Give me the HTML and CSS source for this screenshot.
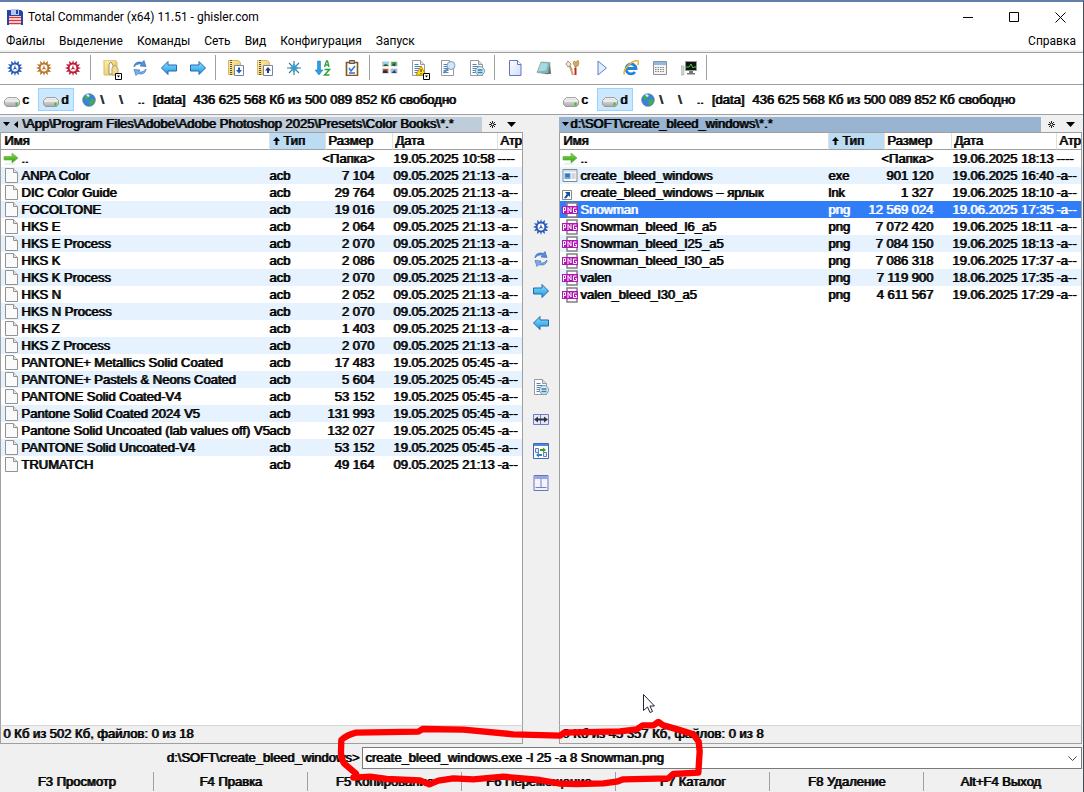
FILE: index.html
```html
<!DOCTYPE html>
<html lang="ru">

<head>
  <meta charset="UTF-8" />
  <meta name="viewport" content="width=device-width, initial-scale=1.0" />
  <title>Total Commander (x64) 11.51 - ghisler.com</title>
  <link rel="stylesheet" href="styles.css">
</head>

<body>
  <!-- ICONS -->
  <svg class="defs" aria-hidden="true">
    <defs>
      <linearGradient id="gBlue" x1="0" y1="0" x2="0" y2="1">
        <stop offset="0" stop-color="#8fe0ff" />
        <stop offset="1" stop-color="#1c96e0" />
      </linearGradient>
      <linearGradient id="gGreen" x1="0" y1="0" x2="0" y2="1">
        <stop offset="0" stop-color="#8be04a" />
        <stop offset="1" stop-color="#2c9a10" />
      </linearGradient>
      <linearGradient id="gFolder" x1="0" y1="0" x2="1" y2="1">
        <stop offset="0" stop-color="#fff0ae" />
        <stop offset="1" stop-color="#e4bd55" />
      </linearGradient>
      <linearGradient id="gDisk" x1="0" y1="0" x2="0" y2="1">
        <stop offset="0" stop-color="#f4f4f4" />
        <stop offset="1" stop-color="#a9a9a9" />
      </linearGradient>
      <linearGradient id="gPage" x1="0" y1="0" x2="1" y2="1">
        <stop offset="0" stop-color="#ffffff" />
        <stop offset="1" stop-color="#cfdcfa" />
      </linearGradient>
    </defs>
    <symbol id="gear" viewBox="0 0 16 16">
      <path d="M8 0l1 3.2L12 1l-.4 3.4L15 4.500l-2.200 2.500L16 8l-3.200 1.200L15 12l-3.500-.300L12 15l-3-2.200L8 16l-1-3.200L4 15l.400-3.400L1 12l2.200-2.800L0 8l3.200-1.200L1 4.200l3.500.200L4 1l3 2.200z" fill="currentColor" />
      <circle cx="8" cy="8" r="3.400" fill="#fff" />
      <path d="M8 5l.8 3L11 9.500 8 9l-2.500 1L7 8z" fill="currentColor" />
    </symbol>
    <symbol id="tools" viewBox="0 0 19 20">
      <path d="M1 0h11l2 2v13H1z" fill="url(#gFolder)" stroke="#dcb95c" />
      <path d="M6 14V4l2-2 2 3v9z" fill="#f8f8f2" stroke="#999680" />
      <path d="M9 15V8l3-3 3 4v6z" fill="#eedb9a" stroke="#c3a25b" />
      <path d="M12.500 13.500h6v6h-6z" fill="#fff" stroke="#000" />
      <path d="M14 15.500h3l-1.500 2z" fill="#000" />
    </symbol>
    <symbol id="refresh" viewBox="0 0 16 16">
      <path d="M2 7C2 3 6 1 10 2.500L12 .500l2 6-6-.500 1.500-1.500C7 3.500 4.500 4 2 7z" fill="#568fd6" stroke="#2b61b1" stroke-width=".6" />
      <path d="M14 9c0 4-4 6-8 4.500l-2 2-2-6 6 .500-1.500 1.500C9 12.500 11.500 12 14 9z" fill="#7db1eb" stroke="#2b61b1" stroke-width=".6" />
    </symbol>
    <symbol id="left" viewBox="0 0 16 16">
      <path d="M.500 8L7 1.500V5h8.500v6H7v3.500z" fill="url(#gBlue)" stroke="#2369ad" />
    </symbol>
    <symbol id="right" viewBox="0 0 16 16">
      <path d="M15.500 8L9 1.500V5H.500v6H9v3.500z" fill="url(#gBlue)" stroke="#2369ad" />
    </symbol>
    <symbol id="zip" viewBox="0 0 16 16">
      <path d="M.500.500h10l2 2v12h-12z" fill="url(#gFolder)" stroke="#dcb95c" />
      <path d="M3 0v15" stroke="#5a5340" stroke-width="2" stroke-dasharray="1 1" />
      <path d="M6.500 5.500h9v10h-9z" fill="#fff" stroke="#7483a8" />
    </symbol>
    <symbol id="pack" viewBox="0 0 16 16">
      <use href="#zip" />
      <path d="M8 10h2V7.500h2V10h2l-3 3.500z" fill="#1d5dab" />
    </symbol>
    <symbol id="unpack" viewBox="0 0 16 16">
      <use href="#zip" />
      <path d="M8 10.500h2V13h2v-2.500h2L11 7z" fill="#173c88" />
    </symbol>
    <symbol id="star" viewBox="0 0 16 16">
      <path d="M8 1v14M1 8h14M3 3l10 10M13 3L3 13" stroke="#4d7a90" stroke-width="1.200" />
      <path d="M8 4v8M4 8h8M5.500 5.500l5 5M10.500 5.500l-5 5" stroke="#2fa0d0" stroke-width="1.400" />
    </symbol>
    <symbol id="sort" viewBox="0 0 16 16">
      <path d="M2.500 1h3v9H8l-4 5-4-5h2.500z" fill="#2c9ee2" stroke="#1874b8" stroke-width=".5" />
      <path d="M9.500 7l2-6h1l1.500 6M10 5h3.500" stroke="#2fa040" stroke-width="1.300" fill="none" />
      <path d="M9.500 9.500h5l-5 5.500h5" stroke="#2fa040" stroke-width="1.400" fill="none" />
    </symbol>
    <symbol id="clip" viewBox="0 0 16 16">
      <path d="M2.500 2.500h11v13h-11z" fill="#fff" stroke="#8a5420" stroke-width="1.600" />
      <path d="M5.500.500h5v3h-5z" fill="#aaa" stroke="#555" />
      <path d="M5 8l2 3 4-5M5 13h6" stroke="#2d77c9" stroke-width="1.500" fill="none" />
    </symbol>
    <symbol id="thumbs" viewBox="0 0 16 16">
      <path d="M0 1.500h7v5H0zM8.500 1.500h7v5h-7zM0 8.500h7v5H0zM8.500 8.500h7v5h-7z" fill="#c8c8c8" />
      <path d="M1 2h5v4H1z" fill="#8fd0f2" />
      <path d="M1 6l2-2 3 1v1z" fill="#245a2d" />
      <path d="M9.500 2h5v4h-5z" fill="#42a23a" />
      <path d="M10 5l3-2v3z" fill="#163d7a" />
      <path d="M1 9h5v4H1z" fill="#d35624" />
      <path d="M1 11l3-1 2 3H1z" fill="#252b50" />
      <path d="M9.500 9h5v4h-5z" fill="#92b9df" />
      <path d="M9.500 13l3-3 2 3z" fill="#27466e" />
    </symbol>
    <symbol id="doc" viewBox="0 0 16 16">
      <path d="M1.500.500h8l4 4v11h-12z" fill="#fff" stroke="#9a9a9a" />
      <path d="M9.500.500v4h4" fill="#ddd" stroke="#9a9a9a" />
      <path d="M3.500 4.500h4M3.500 6.500h7M3.500 8.500h7M3.500 10.500h5M3.500 12.500h5" stroke="#4f82bd" />
    </symbol>
    <symbol id="warn" viewBox="0 0 19 20">
      <use href="#doc" width="16" height="16" />
      <path d="M10 6l5 9H5z" fill="#ffdf1f" stroke="#c98d00" />
      <path d="M10 9v3M10 13v1" stroke="#3b2b00" />
      <path d="M12.500 13.500h6v6h-6z" fill="#fff" stroke="#000" />
      <path d="M14 15.500h3l-1.500 2z" fill="#000" />
    </symbol>
    <symbol id="find" viewBox="0 0 16 16">
      <use href="#doc" />
      <circle cx="11" cy="5.500" r="4" fill="#cfe5f8" stroke="#7a9fc4" />
      <path d="M8 8.500L3.500 13" stroke="#658bb5" stroke-width="2" />
    </symbol>
    <symbol id="cmp" viewBox="0 0 16 16">
      <use href="#doc" />
      <circle cx="11" cy="11" r="4.500" fill="#dbecf8" stroke="#7f98aa" />
      <path d="M8.500 10h5M8.500 12.500h5" stroke="#347fae" stroke-width="1.300" />
    </symbol>
    <symbol id="page" viewBox="0 0 16 16">
      <path d="M2.500.500h8l3.500 4v11H2.500z" fill="url(#gPage)" stroke="#6575bd" />
      <path d="M10.500.500v4H14" fill="#fff" stroke="#6575bd" />
    </symbol>
    <symbol id="note" viewBox="0 0 16 16">
      <path d="M5 2l9 .500L12 14 1 12.500z" fill="#75b9bd" stroke="#8a9ba0" stroke-width=".7" />
      <path d="M5 3l7 .500-2 7-8 1z" fill="#a5dbe0" />
      <path d="M14 3l1 11H6l6-1z" fill="#6d6f68" />
    </symbol>
    <symbol id="paint" viewBox="0 0 16 16">
      <path d="M4 5l3 5M11 5l-1 5" stroke="#a98b65" stroke-width="1.500" />
      <path d="M5.500 8l2.500 7" stroke="#c9a578" stroke-width="2" />
      <path d="M10.500 8v7" stroke="#c62a20" stroke-width="2" />
      <path d="M1 4l2-3 3 3-1 2-2 1z" fill="#f0e7d8" stroke="#8f6f4a" stroke-width=".7" />
      <path d="M8 3l1-2 2 1 2-2 1 3-1 3-3 1z" fill="#d9a75c" stroke="#a06c2e" stroke-width=".5" />
    </symbol>
    <symbol id="play" viewBox="0 0 16 16">
      <path d="M4 1v14l8.500-7z" fill="#e3ecfc" stroke="#5c7fc9" />
    </symbol>
    <symbol id="ie" viewBox="0 0 16 16">
      <path d="M3.500 8.500H13A5 5 0 1 0 12 12" fill="none" stroke="#2085d8" stroke-width="2.800" />
      <path d="M1.500 14.500C-1 11 9-1 15 1c1 .500.500 3-.500 4" fill="none" stroke="#e8b22c" stroke-width="1.500" />
    </symbol>
    <symbol id="calc" viewBox="0 0 16 16">
      <path d="M1.500 1.500h13v13h-13z" fill="#f4f4f4" stroke="#8c9299" />
      <path d="M2 2h12v3H2z" fill="#8eb8df" />
      <path d="M3 7.500h10M3 9.500h10M3 11.500h10" stroke="#888" stroke-dasharray="1.500 1" />
    </symbol>
    <symbol id="monitor" viewBox="0 0 16 16">
      <path d="M0 6h3v9H0z" fill="#d5d5d5" stroke="#999" stroke-width=".5" />
      <path d="M4.500 1.500h11v9h-11z" fill="#111" stroke="#999" />
      <path d="M5 7h3l2-3 2 4 1-1h2" stroke="#3bd337" fill="none" />
      <path d="M8 11h4v2H8zM6 13h8v1.500H6z" fill="#777" />
    </symbol>
    <symbol id="syncdirs" viewBox="0 0 16 16">
      <path d="M.500 3.500h7v10h-7zM7.500 3.500h8v10h-8z" fill="#e4e9fa" stroke="#7379c9" />
      <path d="M1 8.500l4-3v2h6v-2l4 3-4 3v-2H5v2z" fill="#333" />
    </symbol>
    <symbol id="swap" viewBox="0 0 16 16">
      <path d="M.500.500h15v15H.500z" fill="#fff" stroke="#3f66b5" />
      <path d="M1 1h14v2H1z" fill="#4c8bdb" />
      <path d="M2.500 5.500h3v4h-3zM10.500 9.500h3v4h-3z" fill="#e7ecfb" stroke="#6379bb" />
      <path d="M7 6h3V4.500L13 7l-3 2.500V8H7z" fill="#3b9b20" />
      <path d="M9 11H6V9.500L3 12l3 2.500V13h3z" fill="#2b80ce" />
    </symbol>
    <symbol id="panels" viewBox="0 0 16 16">
      <path d="M1 .500h14v15H1z" fill="#f2f3fc" stroke="#6b74be" />
      <path d="M1.500 1h13v3h-13z" fill="#93a7e3" />
      <path d="M8 4v9M2.500 12.500h11" stroke="#777fc1" />
    </symbol>
    <symbol id="disk" viewBox="0 0 16 10">
      <path d="M3.500.500h9l3 3v4l-2 2h-11l-2-2v-4z" fill="url(#gDisk)" stroke="#8e8e8e" stroke-width=".8" />
      <path d="M1 4h14" stroke="#fff" />
      <path d="M11.500 5.500h2v3h-2z" fill="#35c522" />
    </symbol>
    <symbol id="globe" viewBox="0 0 14 14">
      <circle cx="7" cy="7" r="6.300" fill="#3f7fdb" stroke="#52749e" stroke-width=".7" />
      <path d="M2 4c2-3 5-3 6-2L7 5 4 7zM7 8l3-2 3 1-2 4-3 2z" fill="#36b34a" />
      <path d="M4 2l2-1 2 2-2 1z" fill="#d8edf5" />
    </symbol>
    <symbol id="up" viewBox="0 0 16 12">
      <path d="M1 3.500h8V0l6 5-6 5V7H1z" fill="url(#gGreen)" stroke="#68b04a" stroke-width=".7" />
      <path d="M2 11h10" stroke="#d6e9ce" />
    </symbol>
    <symbol id="file" viewBox="0 0 13 15">
      <path d="M.500.500h8l4 4v10H.500z" fill="#fafafa" stroke="#929292" />
      <path d="M8.500.500v4h4" fill="#e4e4e4" stroke="#929292" />
    </symbol>
    <symbol id="exe" viewBox="0 0 15 13">
      <path d="M.500.500h14v12H.500z" fill="#fafafa" stroke="#7e8a96" />
      <path d="M1 2h13" stroke="#b8c3cd" />
      <path d="M2 4h6v6H2z" fill="#6aa5db" />
      <path d="M3 5h4v3H3z" fill="#2d75bd" />
      <path d="M9 5h4M9 7h4M9 9h4" stroke="#a2b7ca" />
    </symbol>
    <symbol id="lnk" viewBox="0 0 10 10">
      <path d="M.500.500h9v9h-9z" fill="#fff" stroke="#888" />
      <path d="M3 2h5v5L6.500 5.500 4 8.500 2 8l2.800-4z" fill="#194f9c" />
    </symbol>
    <symbol id="png" viewBox="0 0 16 16">
      <path d="M5 1h10v14H5z" fill="#fff" stroke="#808080" stroke-width="1.500" />
      <path d="M0 4h16v8H0z" fill="#b515b5" />
      <path d="M1.500 11V5.500h2v3h-2M6 11V5.500L9 10V5M14.500 6h-3v4.500h3V8.500H13" stroke="#fff" fill="none" />
    </symbol>
    <symbol id="drop" viewBox="0 0 9 5">
      <path d="M0 0h9L4.500 5z" fill="#000" />
    </symbol>
    <symbol id="fav" viewBox="0 0 7 7">
      <path d="M3.500 0v7M0 3.500h7M1 1l5 5M6 1L1 6" stroke="#000" stroke-width=".9" />
      <circle cx="3.500" cy="3.500" r="1" fill="#fff" />
    </symbol>
    <symbol id="sortup" viewBox="0 0 7 8">
      <path d="M3.500 0L7 4H4.500v4h-2V4H0z" fill="#000" />
    </symbol>
  </svg>

  <div class="window">
    <header class="titlebar">
      <svg class="logo" viewBox="0 0 16 16">
        <path d="M0 1h14l2 2v13H0z" fill="#2345a5" />
        <path d="M4 0h8v6H4z" fill="#b9c8e8" />
        <path d="M9 1h2v4H9z" fill="#2345a5" />
        <path d="M2 7h12v9H2z" fill="#fff" />
        <path d="M2 8.500h12M2 11.500h12M2 14.500h12" stroke="#e0303a" stroke-width="1.500" />
      </svg>
      <h1>Total Commander (x64) 11.51 - ghisler.com</h1>
      <div class="winbtns">
        <button aria-label="Свернуть"><svg viewBox="0 0 11 11"><path d="M0 5.500h10" /></svg></button>
        <button aria-label="Развернуть"><svg viewBox="0 0 11 11"><path d="M.500.500h9v9h-9z" /></svg></button>
        <button aria-label="Закрыть"><svg viewBox="0 0 11 11"><path d="M.500.500l10 10M10.500.500l-10 10" /></svg></button>
      </div>
    </header>

    <nav class="menu">
      <button>Файлы</button>
      <button>Выделение</button>
      <button>Команды</button>
      <button>Сеть</button>
      <button>Вид</button>
      <button>Конфигурация</button>
      <button>Запуск</button>
      <button class="help">Справка</button>
    </nav>

    <div class="toolbar" id="toolbar"></div>

    <div class="drives">
      <div class="drivebar">
        <button class="drive"><svg class="disk"><use href="#disk" /></svg>c</button>
        <button class="drive active"><svg class="disk"><use href="#disk" /></svg>d</button>
        <button class="net"><svg class="globe"><use href="#globe" /></svg>\</button>
        <button class="nav">\</button>
        <button class="nav">..</button>
        <span class="label">[data]</span>
        <span>436 625 568 Кб из 500 089 852 Кб свободно</span>
      </div>
      <div class="drivebar">
        <button class="drive"><svg class="disk"><use href="#disk" /></svg>c</button>
        <button class="drive active"><svg class="disk"><use href="#disk" /></svg>d</button>
        <button class="net"><svg class="globe"><use href="#globe" /></svg>\</button>
        <button class="nav">\</button>
        <button class="nav">..</button>
        <span class="label">[data]</span>
        <span>436 625 568 Кб из 500 089 852 Кб свободно</span>
      </div>
    </div>

    <main class="panels">
      <section class="panel">
        <div class="pathrow">
          <div class="path">
            <svg class="tri" viewBox="0 0 7 4"><path d="M0 0h7L3.500 4z" /></svg>
            <svg class="back" viewBox="0 0 4 7"><path d="M4 0v7L0 3.500z" /></svg>
            <span>\App\Program Files\Adobe\Adobe Photoshop 2025\Presets\Color Books\*.*</span>
          </div>
          <button class="favbtn" aria-label="Избранное"><svg><use href="#fav" /></svg></button>
          <button class="histbtn" aria-label="История"><svg><use href="#drop" /></svg></button>
        </div>
        <div class="list">
          <table>
            <thead>
              <tr>
                <th class="name">Имя</th>
                <th class="ext"><svg><use href="#sortup" /></svg>Тип</th>
                <th class="size">Размер</th>
                <th class="date">Дата</th>
                <th class="attr">Атр</th>
              </tr>
            </thead>
            <tbody id="leftFiles"></tbody>
          </table>
        </div>
        <div class="status">0 Кб из 502 Кб, файлов: 0 из 18</div>
      </section>

      <div class="middle" id="middle"></div>

      <section class="panel">
        <div class="pathrow">
          <div class="path current">
            <svg class="tri" viewBox="0 0 7 4"><path d="M0 0h7L3.500 4z" /></svg>
            <span>d:\SOFT\create_bleed_windows\*.*</span>
          </div>
          <button class="favbtn" aria-label="Избранное"><svg><use href="#fav" /></svg></button>
          <button class="histbtn" aria-label="История"><svg><use href="#drop" /></svg></button>
        </div>
        <div class="list">
          <table>
            <thead>
              <tr>
                <th class="name">Имя</th>
                <th class="ext"><svg><use href="#sortup" /></svg>Тип</th>
                <th class="size">Размер</th>
                <th class="date">Дата</th>
                <th class="attr">Атр</th>
              </tr>
            </thead>
            <tbody id="rightFiles"></tbody>
          </table>
        </div>
        <div class="status">0 Кб из 45 357 Кб, файлов: 0 из 8</div>
      </section>
    </main>

    <div class="cmdline">
      <label for="cmd">d:\SOFT\create_bleed_windows&gt;</label>
      <div class="combo">
        <input id="cmd" type="text" value="create_bleed_windows.exe -l 25 -a 8 Snowman.png" />
        <button aria-label="Список команд"><svg viewBox="0 0 9 5"><path d="M.500.500l4 4 4-4" /></svg></button>
      </div>
    </div>

    <footer class="fkeys">
      <button>F3 Просмотр</button>
      <button>F4 Правка</button>
      <button>F5 Копирование</button>
      <button>F6 Перемещение</button>
      <button>F7 Каталог</button>
      <button>F8 Удаление</button>
      <button>Alt+F4 Выход</button>
    </footer>
  </div>

  <svg class="marker" viewBox="0 0 1200 336" aria-hidden="true">
    <path d="M78 281L42 250Q32 235 33 215L34 180Q50 165 78 158L265 155L278 147L400 149L550 163L690 167L702 158L870 154L920 148L938 136L970 136L985 126L1000 136L1045 149L1090 163L1106 185L1109 215L1105 278L1030 282L1015 295L880 298L860 305L820 310L740 312L690 311L630 300L520 290L430 298L370 295L325 302L298 313L270 301L170 297L120 290L70 293" />
  </svg>
  <svg class="cursor" viewBox="0 0 12 19" aria-hidden="true">
    <path d="M.500.500v16l4-3.500 2.500 5.500 2.500-1-2.500-5.500h4.500z" />
  </svg>

  <script>
    const icon = (id, cls = '') => `<svg class="${cls}"><use href="#${id}" /></svg>`;

    const toolbar = [
      ['gear', 'blue'], ['gear', 'orange'], ['gear', 'red'], null,
      ['tools', 'big'], ['refresh'], ['left'], ['right'], null,
      ['pack'], ['unpack'], ['star'], ['sort'], ['clip'], null,
      ['thumbs'], ['warn', 'big'], ['find'], ['cmp'], null,
      ['page'], ['note'], ['paint'], ['play'], ['ie'], ['calc'], ['monitor'], null
    ];
    document.getElementById('toolbar').innerHTML = toolbar
      .map(b => b ? `<button aria-label="${b[0]}">${icon(b[0], b[1])}</button>` : '<i class="sep"></i>')
      .join('');

    const middle = [['gear', 'blue'], ['refresh'], ['right'], ['left'], null, ['cmp'], ['syncdirs'], ['swap'], ['panels']];
    document.getElementById('middle').innerHTML = middle
      .map(b => b ? `<button aria-label="${b[0]}">${icon(b[0], b[1])}</button>` : '<i class="space"></i>')
      .join('');

    // icon, name, type, size, date, attributes
    const leftFiles = [
      ['up', '..', '', '<Папка>', '19.05.2025 10:58', '----'],
      ['file', 'ANPA Color', 'acb', '7 104', '09.05.2025 21:13', '-a--'],
      ['file', 'DIC Color Guide', 'acb', '29 764', '09.05.2025 21:13', '-a--'],
      ['file', 'FOCOLTONE', 'acb', '19 016', '09.05.2025 21:13', '-a--'],
      ['file', 'HKS E', 'acb', '2 064', '09.05.2025 21:13', '-a--'],
      ['file', 'HKS E Process', 'acb', '2 070', '09.05.2025 21:13', '-a--'],
      ['file', 'HKS K', 'acb', '2 086', '09.05.2025 21:13', '-a--'],
      ['file', 'HKS K Process', 'acb', '2 070', '09.05.2025 21:13', '-a--'],
      ['file', 'HKS N', 'acb', '2 052', '09.05.2025 21:13', '-a--'],
      ['file', 'HKS N Process', 'acb', '2 070', '09.05.2025 21:13', '-a--'],
      ['file', 'HKS Z', 'acb', '1 403', '09.05.2025 21:13', '-a--'],
      ['file', 'HKS Z Process', 'acb', '2 070', '09.05.2025 21:13', '-a--'],
      ['file', 'PANTONE+ Metallics Solid Coated', 'acb', '17 483', '19.05.2025 05:45', '-a--'],
      ['file', 'PANTONE+ Pastels & Neons Coated', 'acb', '5 604', '19.05.2025 05:45', '-a--'],
      ['file', 'PANTONE Solid Coated-V4', 'acb', '53 152', '19.05.2025 05:45', '-a--'],
      ['file', 'Pantone Solid Coated 2024 V5', 'acb', '131 993', '19.05.2025 05:45', '-a--'],
      ['file', 'Pantone Solid Uncoated (lab values off) V5', 'acb', '132 027', '19.05.2025 05:45', '-a--'],
      ['file', 'PANTONE Solid Uncoated-V4', 'acb', '53 152', '19.05.2025 05:45', '-a--'],
      ['file', 'TRUMATCH', 'acb', '49 164', '09.05.2025 21:13', '-a--']
    ];
    const rightFiles = [
      ['up', '..', '', '<Папка>', '19.06.2025 18:13', '----'],
      ['exe', 'create_bleed_windows', 'exe', '901 120', '19.06.2025 16:40', '-a--'],
      ['lnk', 'create_bleed_windows – ярлык', 'lnk', '1 327', '19.06.2025 18:10', '-a--'],
      ['png', 'Snowman', 'png', '12 569 024', '19.06.2025 17:35', '-a--'],
      ['png', 'Snowman_bleed_l6_a5', 'png', '7 072 420', '19.06.2025 18:11', '-a--'],
      ['png', 'Snowman_bleed_l25_a5', 'png', '7 084 150', '19.06.2025 18:13', '-a--'],
      ['png', 'Snowman_bleed_l30_a5', 'png', '7 086 318', '19.06.2025 17:37', '-a--'],
      ['png', 'valen', 'png', '7 119 900', '18.06.2025 17:35', '-a--'],
      ['png', 'valen_bleed_l30_a5', 'png', '4 611 567', '19.06.2025 17:29', '-a--']
    ];

    const esc = (s) => s.replace(/&/g, '&amp;').replace(/</g, '&lt;').replace(/>/g, '&gt;');

    const fill = (id, files, selected) => {
      document.getElementById(id).innerHTML = files.map((f, i) => `
        <tr class="${i === selected ? 'selected' : ''}">
          <td><div class="file">${icon(f[0], 'ico-' + f[0])}<span>${esc(f[1])}</span></div></td>
          <td>${f[2]}</td>
          <td><div class="num">${esc(f[3])}</div></td>
          <td class="when">${f[4]}</td>
          <td>${f[5]}</td>
        </tr>`).join('');
    };
    fill('leftFiles', leftFiles, -1);
    fill('rightFiles', rightFiles, 3);
  </script>
</body>

</html>
```
FILE: styles.css
```css
* {
  box-sizing: border-box;
}

body {
  margin: 0;
  position: relative;
  overflow: hidden;
  font: 13px/17px "Liberation Sans", Arial, sans-serif;
  color: #000;
}

button {
  padding: 0;
  border: 0;
  background: none;
  font: inherit;
  color: inherit;
  text-shadow: inherit;
}

svg {
  display: block;
  flex: none;
}

.defs {
  position: absolute;
  width: 0;
  height: 0;
}

.window {
  display: flex;
  flex-direction: column;
  height: 100vh;
  background: #f0f0f0;
  border-top: 2px solid #6380ab;
  border-right: 1px solid #454b55;
}

/* title and menu */
.titlebar {
  display: flex;
  align-items: center;
  height: 30px;
  padding-left: 7px;
  background: #fff;
}

.titlebar h1 {
  margin: 0 0 0 5px;
  flex: 1;
  font: 12px/16px Roboto, "Open Sans", sans-serif;
}

.logo {
  width: 16px;
  height: 16px;
}

.winbtns {
  display: flex;
}

.winbtns button {
  display: grid;
  place-items: center;
  width: 46px;
  height: 28px;
}

.winbtns svg {
  width: 11px;
  height: 11px;
  fill: none;
  stroke: #000;
}

.menu {
  display: flex;
  gap: 14px;
  height: 20px;
  padding: 0 7px 0 6px;
  background: #fff;
  border-bottom: 2px solid #f0f0f0;
  font: 12px/18px Roboto, "Open Sans", sans-serif;
}

.help {
  margin-left: auto;
}

/* toolbar */
.toolbar {
  display: flex;
  align-items: center;
  height: 33px;
  padding-bottom: 2px;
  background: #fff;
  border-top: 1px solid #a0a0a0;
  border-bottom: 1px solid #a0a0a0;
}

.toolbar button {
  display: grid;
  place-items: center;
  width: 29px;
  height: 29px;
}

.toolbar svg,
.middle svg {
  width: 16px;
  height: 16px;
}

.toolbar .big {
  width: 19px;
  height: 20px;
  margin: 4px 0 0 3px;
}

.sep {
  width: 1px;
  height: 25px;
  margin: 0 5px 0 3px;
  background: #a0a0a0;
}

.blue {
  color: #2858b8;
}

.orange {
  color: #b87528;
}

.red {
  color: #c01838;
}

/* bold look of the classic system font */
.drives,
.panels,
.cmdline,
.fkeys {
  text-shadow: 1px 0 0 currentColor;
}

.drives {
  display: flex;
  gap: 36px;
  height: 30px;
  padding-right: 1px;
  background: #fff;
  border-bottom: 1px solid #a0a0a0;
}

.drivebar {
  display: flex;
  align-items: center;
  flex: 1;
  min-width: 0;
  white-space: nowrap;
}

.drive {
  display: flex;
  align-items: center;
  gap: 2px;
  width: 38px;
  height: 23px;
  padding-left: 4px;
}

.drive.active {
  width: 36px;
  background: #cce8ff;
  border: 1px solid #99d1ff;
}

.disk {
  width: 16px;
  height: 10px;
  margin-top: 4px;
}

.globe {
  width: 14px;
  height: 14px;
}

.net {
  display: flex;
  align-items: center;
  gap: 4px;
  margin-left: 8px;
}

.nav {
  margin-left: 15px;
}

.label {
  margin: 0 8px;
}

/* panels */
.panels {
  display: grid;
  grid-template-columns: minmax(0, 1fr) 36px minmax(0, 1fr);
  flex: 1;
  min-height: 0;
  padding-right: 1px;
}

.panel {
  display: flex;
  flex-direction: column;
  min-height: 0;
}

.pathrow {
  display: flex;
  align-items: center;
  height: 17px;
  padding-top: 1px;
}

.path {
  display: flex;
  align-items: center;
  flex: 1;
  gap: 4px;
  min-width: 0;
  height: 15px;
  padding-left: 3px;
  line-height: 13px;
  white-space: nowrap;
  background: #bfcddb;
}

.path span {
  height: 15px;
}

.path.current {
  gap: 1px;
  background: #99b4d1;
}

.tri {
  width: 7px;
  height: 4px;
}

.back {
  width: 4px;
  height: 7px;
}

.favbtn svg {
  width: 7px;
  height: 7px;
  margin-left: 7px;
}

.histbtn svg {
  width: 9px;
  height: 5px;
  margin: 0 7px 0 11px;
}

.list {
  flex: 1;
  min-height: 0;
  overflow: hidden;
  background: #fff;
  border: 1px solid #a0a0a0;
  border-bottom-color: #d5d5d5;
}

table {
  width: 100%;
  table-layout: fixed;
  border-spacing: 0;
}

th,
td {
  height: 17px;
  padding: 0;
  line-height: 17px;
  text-align: left;
  white-space: nowrap;
}

th {
  padding-left: 3px;
  border-bottom: 1px solid #a0a0a0;
  line-height: 16px;
  font-weight: normal;
}

th + th {
  padding-left: 2px;
  border-left: 1px solid #e0e0e0;
}

.ext {
  width: 56px;
  background: #bcdcf4;
}

.ext svg {
  display: inline-block;
  width: 7px;
  height: 8px;
  margin: 0 3px 0 1px;
}

.size {
  width: 67px;
}

.date {
  width: 105px;
}

.attr {
  width: 25px;
}

.when {
  padding-left: 1px;
}

.file {
  display: flex;
  align-items: center;
}

.file svg {
  width: 16px;
  margin-left: 2px;
}

.file span {
  padding-left: 2px;
}

.ico-up {
  height: 12px;
}

.file .ico-file {
  width: 13px;
  height: 15px;
  margin: 0 1px 0 4px;
}

.ico-exe {
  height: 13px;
}

.file .ico-lnk {
  width: 10px;
  height: 10px;
  margin: 4px 6px 0 2px;
}

.ico-png {
  height: 16px;
}

.num {
  display: flex;
  justify-content: flex-end;
  padding-right: 18px;
}

tbody tr:nth-child(even) {
  background: #e6f2fe;
}

tbody .selected:nth-child(even) {
  background: #317cf7;
  color: #fff;
}

.status {
  height: 18px;
  padding-left: 2px;
  line-height: 16px;
  border: 1px solid #a0a0a0;
  border-top: 0;
}

.middle {
  display: flex;
  flex-direction: column;
  align-items: center;
  padding-top: 96px;
}

.middle button {
  display: grid;
  place-items: center;
  width: 32px;
  height: 32px;
}

.space {
  height: 32px;
}

/* command line and function keys */
.cmdline {
  display: flex;
  align-items: center;
  gap: 3px;
  height: 28px;
  padding: 3px 1px 3px 0;
}

.cmdline label {
  width: 359px;
  padding-bottom: 2px;
  text-align: right;
}

.combo {
  display: flex;
  flex: 1;
  height: 22px;
  background: #fff;
  border: 1px solid #7a7a7a;
}

.combo input {
  flex: 1;
  min-width: 0;
  padding: 0 2px 2px;
  border: 0;
  outline: 0;
  background: none;
  font: inherit;
  color: inherit;
  text-shadow: inherit;
}

.combo button {
  display: grid;
  place-items: center;
  width: 17px;
}

.combo svg {
  width: 9px;
  height: 5px;
  fill: none;
  stroke: #444;
}

.fkeys {
  display: flex;
  height: 20px;
  padding: 0 6px 1px 0;
}

.fkeys button {
  flex: 1;
}

.fkeys button + button {
  border-left: 1px solid #a0a0a0;
}

/* drawn over the window */
.marker {
  position: absolute;
  left: 330px;
  top: 680px;
  width: 400px;
  height: 112px;
  fill: none;
  stroke: #f00;
  stroke-width: 19;
  stroke-linecap: round;
  stroke-linejoin: round;
}

.cursor {
  position: absolute;
  left: 643px;
  top: 694px;
  width: 12px;
  height: 19px;
  fill: #fff;
  stroke: #223;
}
```
